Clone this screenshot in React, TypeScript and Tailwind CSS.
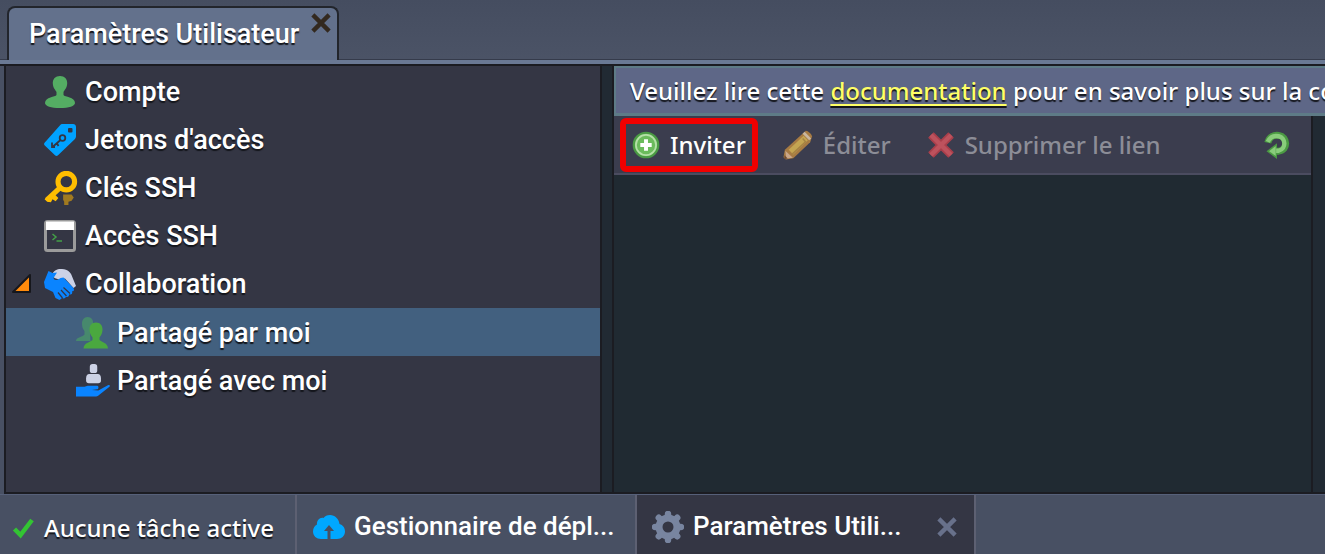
import type { ReactNode } from "react";
import clsx from "clsx";

const shadow = "[text-shadow:0_2px_1px_#14161c]";
const roboto = "font-[Roboto,'Liberation_Sans',sans-serif] font-medium";
const noto = "font-['Noto_Sans','Open_Sans',sans-serif] font-medium";

function Svg({ size = 32, className, children }: { size?: number; className?: string; children: ReactNode }) {
  return (
    <svg width={size} height={size} viewBox="0 0 32 32" fill="none" className={clsx("shrink-0", className)} aria-hidden="true">
      {children}
    </svg>
  );
}

function UserIcon() {
  return (
    <Svg>
      <path
        fill="#54ad63"
        d="M16 0C20.500 0 23.500 3 23.200 7.500 23 12 20.500 14 19.500 16v3c1 2 11.500 2 11.500 8 0 3-6 5-15 5s-15-2-15-5c0-6 10.500-6 11.500-8v-3c-1-2-3.500-4-3.700-8.500C8.500 3 11.500 0 16 0Z"
      />
    </Svg>
  );
}

function TagIcon() {
  return (
    <Svg>
      <path fill="#00a2ff" d="M18.500 0H29c1.800 0 3 1.200 3 3v9c0 1.400-.4 2.400-1.300 3.300L14 31.200c-1 1-2 1-3 0L.8 21.500c-1-1-1-2 0-3L16.300 1c.6-.7 1.200-1 2.200-1Z" />
      <rect x="24" y="4" width="4.500" height="4.500" rx="1" fill="#343644" />
      <circle cx="18.500" cy="14" r="2.800" stroke="#343644" strokeWidth="1.800" />
      <path d="m16.500 16-8 7M13 19.500l1.500 2.500M8 18.500v4.500h3" stroke="#343644" strokeWidth="1.800" />
    </Svg>
  );
}

function KeyIcon() {
  return (
    <Svg size={34}>
      <path fill="#a17a20" d="M18 22h8l2 3-2 3-3 1v3h-4v-3l-1-2Z" />
      <circle cx="21" cy="10" r="7.800" stroke="#ffbe00" strokeWidth="4.800" />
      <path d="M15.500 15.500 2.500 27.500" stroke="#ffbe00" strokeWidth="4.800" />
      <path d="m9 21 4.500 4.500-2.500 3-3-2-1.500 3L3 29 .5 26.500Z" fill="#ffbe00" />
    </Svg>
  );
}

function TerminalIcon() {
  return (
    <Svg>
      <rect x="1.500" y="1.500" width="29" height="29" rx="2" fill="#343644" stroke="#9b9b9b" strokeWidth="3" />
      <path fill="#fff" d="M2 1.500h28V10H2Z" />
      <path d="m8.500 14 3.500 3-3.500 3M12.500 21h5.500" stroke="#43a047" strokeWidth="1.500" />
    </Svg>
  );
}

function HandshakeIcon() {
  return (
    <Svg>
      <path fill="#ccd2e6" d="M8 6.500C10 2 14 .5 18 1c6 .3 9 3.500 10.500 8.500L32 18l-2.500 2L21 10.500l-6 1-4.500-1.500Z" />
      <path
        fill="#0a84ff"
        d="M4.500 3 8.500 5 13 4.500 9.500 10c.5 2.500 4 2.500 7 0l3-.5 9 9.500c2.500 2.500 1.500 4.500-.5 4.200 1 2.500-1 4-3 3 .5 2-1.500 3.300-3.300 2.500 0 1.500-2 2.300-3.500 1.300L15.500 32l-4-2L9 24 1 20 0 14Z"
      />
      <path d="m19.500 19.500 6.500 6M17 22l5.500 6M14 24.500l4.500 5.500" stroke="#343644" strokeWidth="1.200" />
    </Svg>
  );
}

function SharedByIcon() {
  return (
    <Svg>
      <path fill="#47896d" d="M11.500 0c4 0 6 3 5.500 7l-1 5-2 3 .5 9H0c0-4 6-3.500 8.500-6.500V14C6.500 12 6 9 6 6.500 6 3 8 0 11.500 0Z" />
      <path
        fill="#4aa83f"
        d="M20 5.500c4.500 0 6.800 3.200 6.500 7.500-.2 4-2 6-3 7.500V23c2.500 2.500 8 2.500 8.500 8.500H7.500C8 25.500 14 25.500 16.500 23v-2.500c-1-1.500-2.800-3.500-3-7.500-.3-4.300 2-7.500 6.500-7.500Z"
      />
    </Svg>
  );
}

function SharedWithIcon() {
  return (
    <Svg size={34}>
      <rect x="13" y="0" width="7" height="8.500" rx="2.500" fill="#ccd2e6" />
      <path fill="#ccd2e6" d="M12.500 9.500h8c2 0 3 1.500 3 4V16c0 1-1 2-2.500 2h-9c-1.500 0-2.500-1-2.500-2v-2.500c0-2.500 1-4 3-4Z" />
      <path fill="#0a84ff" d="M0 21.500h8l3-1h9c1.500 0 1.500 3 0 3.300L15 24.500l6 .5L30 20c1.500-.5 2.500 0 1.500 1.500L22 29c-1 1-2 1.500-3 1.500H0Z" />
    </Svg>
  );
}

function AddIcon() {
  return (
    <Svg size={28}>
      <circle cx="16" cy="16" r="14" fill="#6bbb5c" stroke="#4a9a44" strokeWidth="2.500" />
      <circle cx="16" cy="16" r="11.500" stroke="#b5e0a8" strokeWidth="2" />
      <path d="M16 9.500v13M9.500 16h13" stroke="#fff" strokeWidth="4.500" />
    </Svg>
  );
}

function PencilIcon() {
  return (
    <Svg size={30}>
      <path fill="#a77b43" d="M24 1c1.500-1 6.500 3 7 6l-2 6L11 30l-8 1.500L.5 29 2 21Z" />
      <path d="m22 6 4.500 5L11 26l-5-5Z" fill="#c4a552" />
      <path d="m21 9 3 3.500L9.500 26" stroke="#a58343" strokeWidth="1.500" />
      <path d="m22 3 7 7" stroke="#c9b7a0" strokeWidth="3" />
      <path d="m2.500 22 8 7.500-7 1Z" fill="#c9a78a" />
      <path d="m1.500 27 3.500 3.500-3.500.5Z" fill="#6d4a33" />
    </Svg>
  );
}

function DeleteIcon() {
  return (
    <Svg size={28}>
      <path d="M4.500 4.500 27.500 27.500M27.500 4.500 4.500 27.500" stroke="#a93f4b" strokeWidth="9" />
      <path d="m4.500 4.500 23 23M27.500 4.500l-23 23" stroke="#bd525d" strokeWidth="5" />
    </Svg>
  );
}

function RefreshIcon() {
  return (
    <Svg size={28}>
      <path d="M5.500 13.500C7 6.500 13 4 18 5c10 1.500 11 16.500 0 18h-3" stroke="#4b9a43" strokeWidth="8" />
      <path fill="#4b9a43" d="M16 14v18L4 23Z" />
      <path d="M5.500 12.500C8 6.500 13 5 18 6c8 1.500 9 14.500 0 16.500h-3" stroke="#89cc7b" strokeWidth="5" />
      <path fill="#89cc7b" d="M14.500 17v11.500L7 23Z" />
    </Svg>
  );
}

function CloudIcon() {
  return (
    <Svg>
      <path
        fill="#00a8ff"
        d="M8 28c-4.500 0-8-3-8-7.500 0-3.500 2-6 4-7C3.500 9.500 7 6 10.500 7 12 5 14 4 17 4c5 0 9 4 9.500 9 3.500 1 5.500 4 5.500 7.500 0 4.500-3.500 7.500-8 7.500h-6.500v-8h3.500l-5-6-5 6h3.500v8Z"
      />
    </Svg>
  );
}

function GearIcon() {
  return (
    <Svg>
      <circle cx="16" cy="16" r="9" stroke="#7885a0" strokeWidth="7" />
      <path
        d="M16 3v2M16 27v2M3 16h2M27 16h2M6.800 6.800l1.400 1.400M23.800 23.800l1.400 1.400M25.200 6.800l-1.400 1.400M8.200 23.800l-1.400 1.400"
        stroke="#7885a0"
        strokeWidth="6.500"
        strokeLinecap="round"
      />
    </Svg>
  );
}

function CrossIcon({ color }: { color: string }) {
  return (
    <Svg size={20}>
      <path d="m3 3 26 26M29 3 3 29" stroke={color} strokeWidth="7" />
    </Svg>
  );
}

type Item = { label: string; icon: ReactNode; child?: boolean; selected?: boolean; open?: boolean };

const items: Item[] = [
  { label: "Compte", icon: <UserIcon /> },
  { label: "Jetons d'accès", icon: <TagIcon /> },
  { label: "Clés SSH", icon: <KeyIcon /> },
  { label: "Accès SSH", icon: <TerminalIcon /> },
  { label: "Collaboration", icon: <HandshakeIcon />, open: true },
  { label: "Partagé par moi", icon: <SharedByIcon />, child: true, selected: true },
  { label: "Partagé avec moi", icon: <SharedWithIcon />, child: true },
];

function Sidebar() {
  return (
    <nav className="w-[598px] min-w-0 shrink border-2 border-t-0 border-[#1b1c22] bg-[#343644]">
      <ul className="pt-[2px]">
        {items.map((item) => (
          <li key={item.label}>
            <button
              type="button"
              aria-expanded={item.open}
              className={clsx(
                "flex h-12 w-full items-center text-left text-[27px] text-white",
                roboto,
                shadow,
                item.child ? "pt-[2px] pl-[70px]" : "pl-[6px]",
                item.selected && "bg-[#42607f]"
              )}
            >
              {!item.child && (
                <span className="w-8 shrink-0">
                  {item.open && (
                    <svg width="20" height="22" viewBox="0 0 20 22" aria-hidden="true">
                      <path d="M18 2v17H1Z" fill="#ff8a0c" stroke="#16171c" strokeWidth="2" strokeLinejoin="round" />
                    </svg>
                  )}
                </span>
              )}
              <span className="flex w-[41px] shrink-0 justify-start">{item.icon}</span>
              {item.label}
            </button>
          </li>
        ))}
      </ul>
    </nav>
  );
}

function Toolbar() {
  const button = "flex items-center gap-[10px] whitespace-nowrap";
  return (
    <div
      className={clsx(
        "flex h-[59px] items-center border-b-2 border-[#4b4c60] bg-[#3b3d4e] pr-[20px] pl-[6px] text-[24px] text-[#8c8d97]",
        noto,
        shadow
      )}
    >
      <button type="button" className={clsx(button, "h-[54px] rounded-md border-6 border-[#f00000] px-[6px] text-white")}>
        <AddIcon />
        Inviter
      </button>
      <button type="button" disabled className={clsx(button, "ml-[25px]")}>
        <PencilIcon />
        Éditer
      </button>
      <button type="button" disabled className={clsx(button, "ml-[36px]")}>
        <DeleteIcon />
        Supprimer le lien
      </button>
      <button type="button" aria-label="Actualiser" className="ml-auto">
        <RefreshIcon />
      </button>
    </div>
  );
}

function Content() {
  return (
    <main className="flex min-w-0 flex-1 flex-col border-b-2 border-l-2 border-[#1b1c22] bg-[#212a33]">
      <p
        className={clsx(
          "h-[50px] overflow-hidden border-2 border-r-0 border-b-3 border-[#5e7b87] bg-[#5e6787] pl-[14px] text-[24px] leading-[46px] whitespace-nowrap text-white",
          noto,
          shadow
        )}
      >
        Veuillez lire cette{" "}
        <a href="#documentation" className="text-[#ffff66] underline decoration-2 underline-offset-4">
          documentation
        </a>{" "}
        pour en savoir plus sur la collaboration
      </p>
      <div className="mr-3 flex flex-1 flex-col border-r-2 border-[#1b1c22] bg-[#202a32]">
        <Toolbar />
      </div>
    </main>
  );
}

function TaskBar() {
  return (
    <footer className={clsx("flex h-[60px] items-stretch border-t border-[#566079] bg-[#485063] whitespace-nowrap text-white", shadow)}>
      <div className={clsx("flex w-[297px] items-center gap-[9px] border-r-2 border-[#5d6072] pt-[6px] pl-[12px] text-[24px]", noto)}>
        <svg width="23" height="22" viewBox="0 0 23 22" fill="none" aria-hidden="true">
          <path d="m2.500 12 6 6L20 3" stroke="#33c433" strokeWidth="4.500" />
        </svg>
        Aucune tâche active
      </div>
      <button type="button" className={clsx("flex w-[340px] items-center gap-[9px] border-r-2 border-[#5d6072] pt-1 pl-[16px] text-[26px]", roboto)}>
        <CloudIcon />
        Gestionnaire de dépl...
      </button>
      <div className="flex w-[339px] items-center border-r-2 border-[#5d6072] bg-[#343644] pt-1 pr-[17px] pl-[15px]">
        <button type="button" className={clsx("flex items-center gap-[9px] text-[26px]", roboto)}>
          <GearIcon />
          Paramètres Utili...
        </button>
        <button type="button" aria-label="Fermer" className="ml-auto">
          <CrossIcon color="#68718b" />
        </button>
      </div>
    </footer>
  );
}

export default function App() {
  return (
    <div className="flex min-h-screen flex-col overflow-hidden bg-[#485063]">
      <header className="flex h-[60px] items-end border-b border-[#353b4b] bg-linear-to-b from-[#454d60] to-[#4b5366] pl-[7px]">
        <div className="-mb-px flex h-[54px] rounded-t-lg border-2 border-b-0 border-[#22252c] bg-[#63718c] pr-[6px] pl-[20px]">
          <button type="button" className={clsx("text-[27px] text-white", roboto, shadow)}>
            Paramètres Utilisateur
          </button>
          <button type="button" aria-label="Fermer l'onglet" className="ml-3 self-start pt-[5px]">
            <CrossIcon color="#33291f" />
          </button>
        </div>
      </header>
      <div className="h-[6px] border-b-2 border-[#1b1c22] bg-[#6a7994]" />
      <div className="flex flex-1 pl-1">
        <Sidebar />
        <div className="w-[10px] shrink-0 border-b-2 border-[#1b1c22] bg-[#212a33]" />
        <Content />
      </div>
      <TaskBar />
    </div>
  );
}
